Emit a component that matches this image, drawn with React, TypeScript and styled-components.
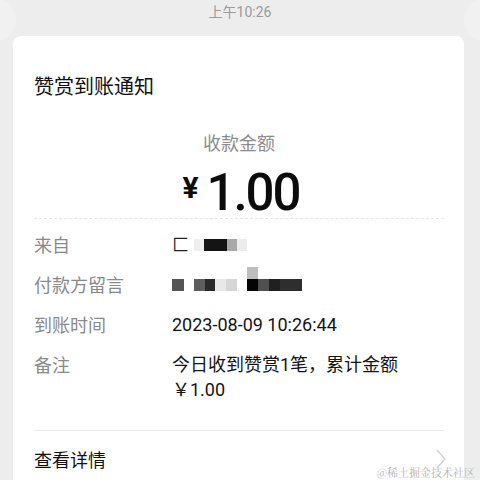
import React from "react";
import styled, { createGlobalStyle } from "styled-components";

const GlobalStyle = createGlobalStyle`
  html, body {
    margin: 0;
    padding: 0;
    background: #ededed;
    height: 480px;
    overflow: hidden;
  }
  body {
    font-family: "Roboto", "Noto Sans CJK SC", sans-serif;
    -webkit-font-smoothing: antialiased;
  }
`;

type Block = { w: number; c: string; up?: string };

const fromBlocks: Block[] = [
  { w: 10, c: "#eeeeee" },
  { w: 23, c: "#141414" },
  { w: 10, c: "#a8a8a8" },
  { w: 10, c: "#ececec" },
];

const memoBlocks: Block[] = [
  { w: 12, c: "#555555" },
  { w: 10, c: "#ffffff" },
  { w: 11, c: "#5e5e5e" },
  { w: 10, c: "#2a2a2a" },
  { w: 11, c: "#e8e8e8" },
  { w: 11, c: "#d6d6d6" },
  { w: 10, c: "#ffffff" },
  { w: 11, c: "#050505", up: "#bdbdbd" },
  { w: 11, c: "#4f4f4f" },
  { w: 11, c: "#202020" },
  { w: 22, c: "#2e2e2e" },
];

const App = () => {
  return (
    <Page>
      <GlobalStyle />
      <Avatar side="left" />
      <Avatar side="right" />
      <TimeStamp>上午10:26</TimeStamp>
      <Card>
        <Title>赞赏到账通知</Title>
        <AmountBlock>
          <AmountLabel>收款金额</AmountLabel>
          <Amount>
            <Currency>¥</Currency>1.00
          </Amount>
        </AmountBlock>
        <Rows>
          <Row>
            <Label>来自</Label>
            <Value>
              <Mosaic>
                <Glyph>匚</Glyph>
                {fromBlocks.map((b, i) => (
                  <Pixel key={i} w={b.w} c={b.c} />
                ))}
              </Mosaic>
            </Value>
          </Row>
          <Row>
            <Label>付款方留言</Label>
            <Value>
              <Mosaic>
                {memoBlocks.map((b, i) => (
                  <Pixel key={i} w={b.w} c={b.c}>
                    {b.up && <PixelUp c={b.up} />}
                  </Pixel>
                ))}
              </Mosaic>
            </Value>
          </Row>
          <Row>
            <Label>到账时间</Label>
            <Value>2023-08-09 10:26:44</Value>
          </Row>
          <Row>
            <Label>备注</Label>
            <Value>
              今日收到赞赏1笔，累计金额
              <br />
              ￥1.00
            </Value>
          </Row>
        </Rows>
        <Footer>
          <FooterText>查看详情</FooterText>
          <Chevron width="10" height="20" viewBox="0 0 10 20">
            <polyline
              points="1,1 9,10 1,19"
              fill="none"
              stroke="#d2d2d2"
              strokeWidth="1.4"
            />
          </Chevron>
        </Footer>
      </Card>
      <Watermark>@稀土掘金技术社区</Watermark>
    </Page>
  );
};

export default App;

const Page = styled.div`
  position: relative;
  width: 480px;
  height: 480px;
  overflow: hidden;
  display: flex;
  flex-direction: column;
`;

const Avatar = styled.div<{ side: "left" | "right" }>`
  position: absolute;
  top: -2px;
  ${(p) => (p.side === "left" ? "left: -28px;" : "right: -28px;")}
  width: 44px;
  height: 44px;
  border-radius: 50%;
  background: #f1f1f1;
`;

const TimeStamp = styled.div`
  height: 25px;
  line-height: 24px;
  text-align: center;
  font-size: 14px;
  color: #9a9a9a;
  position: relative;
`;

const Card = styled.div`
  position: relative;
  margin: 12px 16px 0 13px;
  background: #ffffff;
  border-radius: 8px;
  padding: 36px 20px 30px 21px;
  display: flex;
  flex-direction: column;
`;

const Title = styled.div`
  font-size: 20px;
  line-height: 28px;
  color: #111111;
  font-family: "Noto Sans CJK SC", sans-serif;
`;

const AmountBlock = styled.div`
  margin-top: 29px;
  display: flex;
  flex-direction: column;
  align-items: center;
  border-bottom: 1px dashed #e6e6e6;
`;

const AmountLabel = styled.div`
  font-size: 18px;
  line-height: 26px;
  color: #8c8c8c;
  font-family: "Noto Sans CJK SC", sans-serif;
`;

const Amount = styled.div`
  margin-top: 12px;
  display: flex;
  align-items: center;
  font-size: 51px;
  font-weight: 500;
  line-height: 51px;
  height: 51px;
  color: #0c0c0c;
  letter-spacing: -2px;
  padding-left: 4px;
`;

const Currency = styled.span`
  font-size: 30px;
  font-weight: 700;
  margin-right: 8px;
  margin-top: -10px;
  letter-spacing: 0;
`;

const Rows = styled.div`
  padding-top: 13px;
  display: flex;
  flex-direction: column;
  gap: 15px;
`;

const Row = styled.div`
  display: flex;
  font-size: 18px;
  line-height: 25px;
`;

const Label = styled.div`
  width: 138px;
  flex-shrink: 0;
  color: #8a8a8a;
  font-family: "Noto Sans CJK SC", sans-serif;
`;

const Value = styled.div`
  color: #141414;
`;

const Mosaic = styled.div`
  display: flex;
  align-items: center;
  height: 25px;
`;

const Glyph = styled.span`
  font-size: 17px;
  line-height: 18px;
  color: #222;
  margin-right: 5px;
  margin-top: -2px;
  font-family: "Noto Sans CJK SC", sans-serif;
`;

const Pixel = styled.span<{ w: number; c: string }>`
  position: relative;
  display: block;
  width: ${(p) => p.w}px;
  height: 12px;
  background: ${(p) => p.c};
`;

const PixelUp = styled.span<{ c: string }>`
  position: absolute;
  left: 0;
  bottom: 12px;
  width: 100%;
  height: 12px;
  background: ${(p) => p.c};
`;

const Footer = styled.div`
  margin-top: 28px;
  border-top: 1px solid #ededed;
  padding-top: 15px;
  display: flex;
  align-items: center;
  justify-content: space-between;
`;

const FooterText = styled.div`
  font-size: 18px;
  line-height: 26px;
  color: #111111;
  font-family: "Noto Sans CJK SC", sans-serif;
`;

const Chevron = styled.svg`
  margin-right: -2px;
`;

const Watermark = styled.div`
  position: absolute;
  right: 5px;
  bottom: 1px;
  font-size: 11px;
  line-height: 14px;
  color: #b4b4b4;
  font-family: "Noto Serif CJK SC", "Noto Sans CJK SC", serif;
  text-shadow: 0 0 1px #ffffff;
`;
